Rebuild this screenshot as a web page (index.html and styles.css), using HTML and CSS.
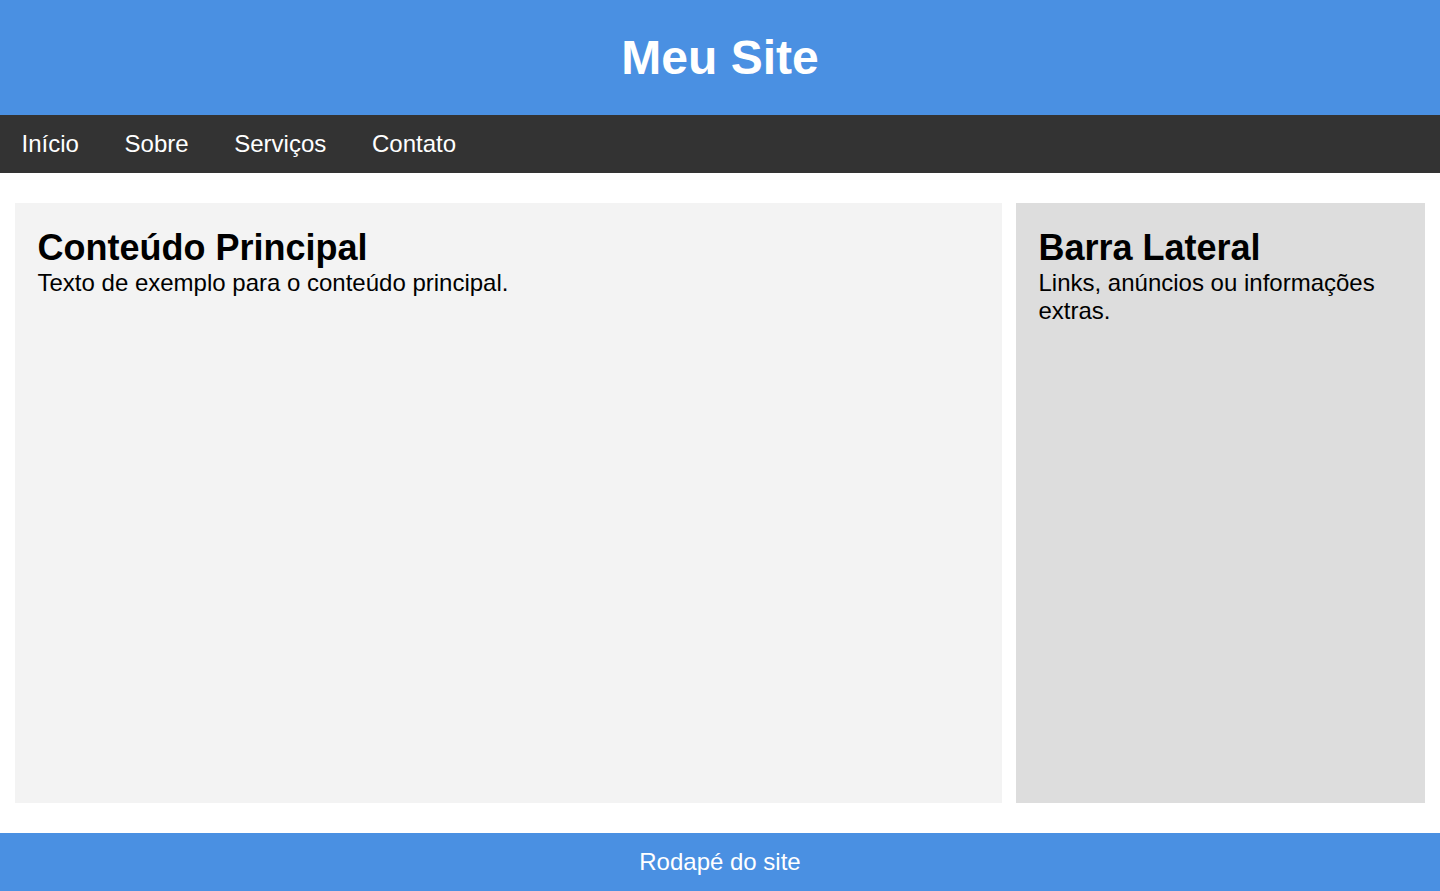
FILE: index.html
```html
<!DOCTYPE html>
<html lang="pt-BR">
<head>
<meta charset="utf-8">
<title>Meu Site</title>
<link rel="stylesheet" href="styles.css">
</head>
<body>
<header class="site-header">
  <h1 class="site-title">Meu Site</h1>
</header>
<nav class="site-nav">
  <a class="nav-link" href="#">Início</a>
  <a class="nav-link" href="#">Sobre</a>
  <a class="nav-link" href="#">Serviços</a>
  <a class="nav-link" href="#">Contato</a>
</nav>
<div class="layout">
  <main class="main-content">
    <h2 class="box-title">Conteúdo Principal</h2>
    <p class="box-text">Texto de exemplo para o conteúdo principal.</p>
  </main>
  <aside class="sidebar">
    <h2 class="box-title">Barra Lateral</h2>
    <p class="box-text">Links, anúncios ou informações extras.</p>
  </aside>
</div>
<footer class="site-footer">Rodapé do site</footer>
</body>
</html>
```

FILE: styles.css
```css
html, body {
  margin: 0;
  padding: 0;
}
body {
  font-family: "Liberation Sans", Arial, sans-serif;
  font-size: 24px;
  color: #000;
  background: #fff;
}
.site-header {
  background: #4a90e2;
  color: #fff;
  text-align: center;
  padding: 30px 0;
}
.site-title {
  margin: 0;
  font-size: 48px;
  font-weight: bold;
}
.site-nav {
  background: #333333;
  padding: 15px 0 15px 2px;
}
.nav-link {
  color: #fff;
  text-decoration: none;
  padding: 0 19.5px;
  font-size: 24px;
}
.layout {
  display: grid;
  grid-template-columns: 987px 409px;
  column-gap: 14px;
  padding: 30px 15px;
}
.main-content,
.sidebar {
  min-height: 600px;
  box-sizing: border-box;
  padding: 24px 22.5px 22px;
}
.main-content {
  background: #f3f3f3;
}
.sidebar {
  background: #dddddd;
}
.box-title {
  margin: 0;
  font-size: 36px;
  font-weight: bold;
}
.box-text {
  margin: 0;
  font-size: 24px;
}
.site-footer {
  background: #4a90e2;
  color: #fff;
  text-align: center;
  padding: 15px 0;
  font-size: 24px;
}
```
